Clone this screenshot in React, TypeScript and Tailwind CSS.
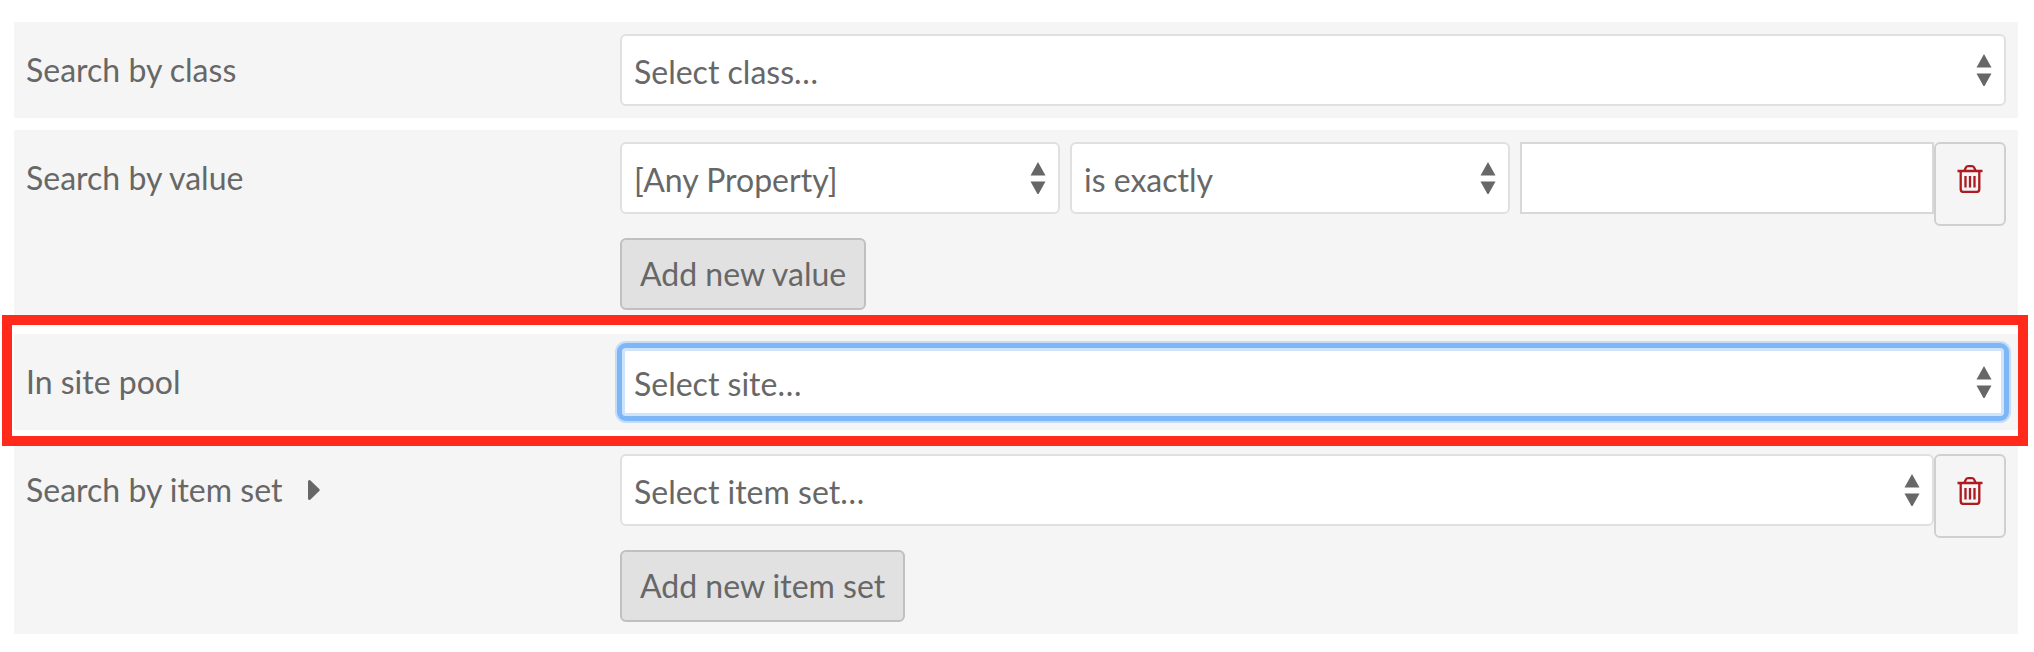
import React, { useState } from "react";
import type { ReactNode } from "react";

type SelectProps = { id?: string; label?: string; options: string[]; focused?: boolean };

function Select({ id, label, options, focused }: SelectProps) {
  const ring = focused
    ? "border-[#7fb6f6] shadow-[inset_0_0_0_3px_#cfe4fb,0_0_0_3px_#7fb6f6,0_0_0_5px_#c3ddf8]"
    : "border-[#e0e0e0]";
  return (
    <div className="relative w-full min-w-0">
      <select
        id={id}
        aria-label={label}
        className={`block h-18 w-full cursor-pointer appearance-none rounded-md border-2 bg-white pt-1 pr-12 pl-3 text-[32px] leading-12 text-[#676767] ${ring}`}
      >
        {options.map((option) => (
          <option key={option}>{option}</option>
        ))}
      </select>
      <svg
        viewBox="0 0 16 32"
        className="pointer-events-none absolute top-5 right-3.5 h-8 w-4 fill-[#676767]"
        aria-hidden="true"
      >
        <path d="M8 0L15.500 13.500H.5zM8 33L15.500 19.500H.5z" />
      </svg>
    </div>
  );
}

function DeleteButton({ label }: { label: string }) {
  return (
    <button
      type="button"
      aria-label={label}
      className="flex h-21 w-18 shrink-0 cursor-pointer justify-center rounded-md border-2 border-[#d0d0d0] pt-5"
    >
      <svg viewBox="0 0 26 29" className="h-[29px] w-6.5 fill-none stroke-[#ad1a20]" strokeWidth="2.3" aria-hidden="true">
        <path d="M.5 7H25.500M7.300 7L8.600 4Q9.300 2.200 11 2.200H15Q16.700 2.200 17.400 4L18.700 7M3.700 7V25Q3.700 28 6.500 28H19.500Q22.300 28 22.300 25V7M8.500 12V23.500M13 12V23.500M17.500 12V23.500" />
      </svg>
    </button>
  );
}

function AddButton({ children }: { children: ReactNode }) {
  return (
    <button
      type="button"
      className="mt-3 block h-18 cursor-pointer rounded-md border-2 border-[#c0c0c0] bg-[#e1e1e1] px-4.5 text-[32px] leading-12 text-[#676767]"
    >
      {children}
    </button>
  );
}

type FieldProps = { label: string; htmlFor: string; extra?: ReactNode; highlighted?: boolean; children: ReactNode };

function Field({ label, htmlFor, extra, highlighted, children }: FieldProps) {
  return (
    <div className="relative flex bg-[#f5f5f5] p-3">
      <div className="flex w-[30%] shrink-0 items-start pt-3">
        <label htmlFor={htmlFor}>{label}</label>
        {extra}
      </div>
      <div className="min-w-0 flex-1">{children}</div>
      {highlighted && (
        <div className="pointer-events-none absolute -top-[19px] -right-2.5 -bottom-4 -left-3 z-10 border-10 border-[#ff2a1c]" />
      )}
    </div>
  );
}

export default function App() {
  const [text, setText] = useState("");
  return (
    <form className="flex flex-col gap-3 bg-white pt-5.5 pr-4 pb-4.5 pl-3.5 font-['Lato',sans-serif] text-[32px] leading-12 text-[#676767]">
      <Field label="Search by class" htmlFor="class">
        <Select id="class" options={["Select class…"]} />
      </Field>
      <Field label="Search by value" htmlFor="property">
        <div className="flex">
          <div className="grid min-w-0 flex-1 grid-cols-[440fr_440fr_414fr] gap-2.5">
            <Select id="property" options={["[Any Property]"]} />
            <Select label="Query type" options={["is exactly"]} />
            <input
              type="text"
              aria-label="Query text"
              value={text}
              onChange={(event) => setText(event.target.value)}
              className="h-18 w-full min-w-0 border-2 border-[#d8d8d8] bg-white px-3"
            />
          </div>
          <DeleteButton label="Remove value" />
        </div>
        <AddButton>Add new value</AddButton>
      </Field>
      <Field label="In site pool" htmlFor="site" highlighted>
        <Select id="site" options={["Select site…"]} focused />
      </Field>
      <Field
        label="Search by item set"
        htmlFor="item-set"
        extra={
          <button type="button" aria-label="Expand" className="ml-5 flex h-12 cursor-pointer items-center px-1.5">
            <svg viewBox="0 0 12 20" className="h-5 w-3 fill-[#676767]" aria-hidden="true">
              <path d="M0 1.500Q0 0 1.500 0Q2 0 3 1L11.500 9.200Q12 10 11.500 10.800L3 19Q2 20 1.500 20Q0 20 0 18.500z" />
            </svg>
          </button>
        }
      >
        <div className="flex">
          <Select id="item-set" options={["Select item set…"]} />
          <DeleteButton label="Remove item set" />
        </div>
        <AddButton>Add new item set</AddButton>
      </Field>
    </form>
  );
}
